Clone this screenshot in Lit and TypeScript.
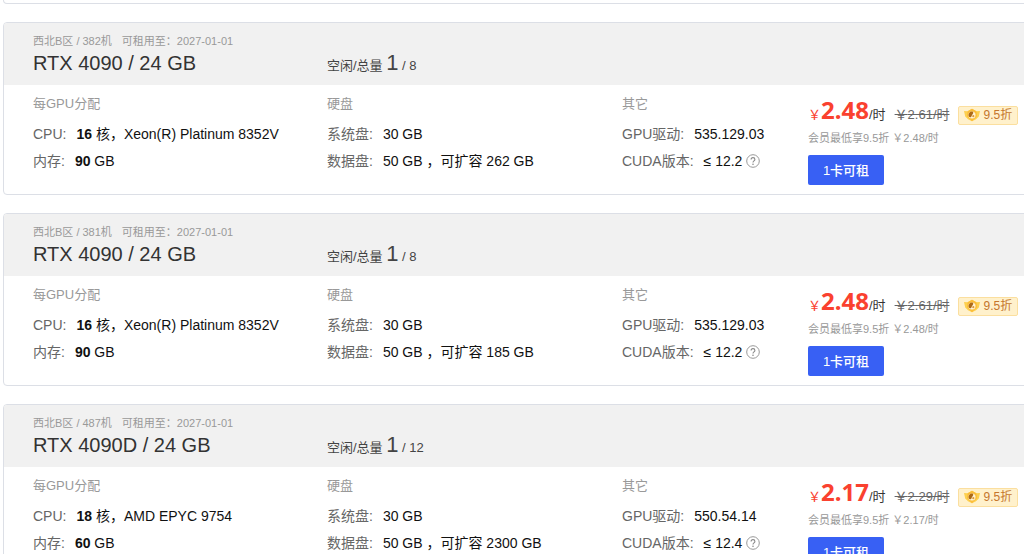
import { LitElement, html, css, svg } from "lit";
import { customElement, property } from "lit/decorators.js";

interface Machine {
  zone: string;
  until: string;
  gpu: string;
  free: number;
  total: number;
  cores: number;
  cpu: string;
  memory: number;
  expand: string;
  driver: string;
  cuda: string;
  price: string;
  original: string;
}

const machines: Machine[] = [
  { zone: "西北B区 / 382机", until: "2027-01-01", gpu: "RTX 4090 / 24 GB", free: 1, total: 8, cores: 16, cpu: "Xeon(R) Platinum 8352V", memory: 90, expand: "262 GB", driver: "535.129.03", cuda: "12.2", price: "2.48", original: "2.61" },
  { zone: "西北B区 / 381机", until: "2027-01-01", gpu: "RTX 4090 / 24 GB", free: 1, total: 8, cores: 16, cpu: "Xeon(R) Platinum 8352V", memory: 90, expand: "185 GB", driver: "535.129.03", cuda: "12.2", price: "2.48", original: "2.61" },
  { zone: "西北B区 / 487机", until: "2027-01-01", gpu: "RTX 4090D / 24 GB", free: 1, total: 12, cores: 18, cpu: "AMD EPYC 9754", memory: 60, expand: "2300 GB", driver: "550.54.14", cuda: "12.4", price: "2.17", original: "2.29" },
];

const helpIcon = svg`<svg class="help" viewBox="0 0 14 14" aria-hidden="true">
  <circle cx="7" cy="7" r="6.3" fill="none" stroke="#999" stroke-width="1"/>
  <path d="M5.1 5.6C5.1 4.4 5.900 3.600 7 3.600s1.900.8 1.900 1.800c0 1.400-1.900 1.500-1.900 3" fill="none" stroke="#888" stroke-width="1.1"/>
  <circle cx="7" cy="10.2" r=".8" fill="#888"/>
</svg>`;

const memberIcon = svg`<svg class="member" viewBox="0 0 16 14" aria-hidden="true">
  <path d="M0 3 3.600 3.200 8 .8l4.400 2.400L16 3l-1.200 5.600-2.800 2.600L8 13.200l-4-2L1.200 8.600Z" fill="#fdd04f"/>
  <path d="M8 .8l4.400 2.400.6 5-5 5-5-5 .6-5Z" fill="#fbbd3a"/>
  <circle cx="8" cy="7" r="3.500" fill="#fff3d6"/>
  <path d="M9.200 3.700A3.500 3.500 0 0 0 5.200 9.100C6.800 9.600 7.600 8.800 7.700 7.700 7.800 6.400 9.600 6 9.200 3.700Z" fill="#ad6a18"/>
  <circle cx="9.300" cy="8.200" r="1.100" fill="#d99a3c"/>
</svg>`;

@customElement("machine-card")
export class MachineCard extends LitElement {
  @property({ attribute: false }) machine!: Machine;

  static styles = css`
    :host {
      display: block;
      border: 1px solid #dcdfe6;
      border-radius: 4px;
      overflow: hidden;
      background: #fff;
    }
    .row {
      display: grid;
      grid-template-columns: minmax(260px, 294fr) minmax(230px, 295fr) minmax(160px, 186fr) minmax(216px, 219fr);
      padding-left: 29px;
    }
    .head {
      background: #f1f1f1;
      height: 62px;
      align-items: end;
    }
    .meta {
      display: flex;
      gap: 10px;
      font-size: 11px;
      line-height: 16px;
      color: #999;
    }
    .name {
      margin: 0;
      padding-bottom: 8px;
      font-size: 20px;
      font-weight: 400;
      line-height: 28px;
      color: #333;
    }
    .stock {
      padding-bottom: 5px;
      font-size: 13px;
      line-height: 28px;
      color: #444;
    }
    .free {
      font-size: 22px;
    }
    .total {
      font-size: 13px;
    }
    .body {
      height: 109px;
      font-size: 14px;
      line-height: 27px;
      color: #111;
    }
    .group {
      padding-top: 9px;
    }
    .group h3 {
      margin: 0 0 8px;
      font-size: 13px;
      font-weight: 400;
      line-height: 19px;
      color: #999;
    }
    .group dl,
    .group dd {
      margin: 0;
    }
    .item {
      display: flex;
      gap: 10px;
      white-space: nowrap;
    }
    .item dt {
      color: #666;
    }
    .help {
      width: 14px;
      height: 14px;
      vertical-align: -2px;
    }
    .buy {
      padding-top: 11px;
    }
    .price {
      display: flex;
      align-items: baseline;
      line-height: 28px;
      white-space: nowrap;
      color: #333;
      font-size: 13px;
    }
    .money {
      color: #fa412f;
    }
    .amount {
      font-family: "Noto Sans", "Noto Sans CJK SC", sans-serif;
      font-size: 24px;
      font-weight: 700;
    }
    .original {
      margin-left: 9px;
      color: #666;
    }
    .badge {
      box-sizing: border-box;
      height: 19px;
      margin-left: 8px;
      padding: 0 5px;
      border: 1px solid #fbdf9f;
      border-radius: 2px;
      background: #fff1cc;
      color: #c5762c;
      font-size: 12px;
      line-height: 17px;
    }
    .member {
      width: 16px;
      height: 14px;
      margin-right: 4px;
      vertical-align: -3px;
    }
    .note {
      margin: 0;
      font-size: 11px;
      line-height: 18px;
      color: #999;
    }
    .rent {
      display: block;
      width: 76px;
      height: 30px;
      margin-top: 8px;
      padding: 0 0 2px;
      border: 0;
      border-radius: 2px;
      background: #3860f4;
      color: #fff;
      font-family: inherit;
      font-size: 13px;
      font-weight: 500;
    }
  `;

  render() {
    const m = this.machine;
    return html`
      <div class="row head">
        <div>
          <div class="meta"><span>${m.zone}</span><span>可租用至：${m.until}</span></div>
          <h2 class="name">${m.gpu}</h2>
        </div>
        <div class="stock">空闲/总量 <span class="free">${m.free}</span> <span class="total">/ ${m.total}</span></div>
      </div>
      <div class="row body">
        <section class="group">
          <h3>每GPU分配</h3>
          <dl>
            <div class="item"><dt>CPU:</dt><dd><b>${m.cores}</b> 核，${m.cpu}</dd></div>
            <div class="item"><dt>内存:</dt><dd><b>${m.memory}</b> GB</dd></div>
          </dl>
        </section>
        <section class="group">
          <h3>硬盘</h3>
          <dl>
            <div class="item"><dt>系统盘:</dt><dd>30 GB</dd></div>
            <div class="item"><dt>数据盘:</dt><dd>50 GB ，可扩容 ${m.expand}</dd></div>
          </dl>
        </section>
        <section class="group">
          <h3>其它</h3>
          <dl>
            <div class="item"><dt>GPU驱动:</dt><dd>${m.driver}</dd></div>
            <div class="item"><dt>CUDA版本:</dt><dd>≤ ${m.cuda} ${helpIcon}</dd></div>
          </dl>
        </section>
        <div class="buy">
          <div class="price">
            <span class="money">￥<span class="amount">${m.price}</span></span><span>/时</span>
            <s class="original">￥${m.original}/时</s>
            <span class="badge">${memberIcon}9.5折</span>
          </div>
          <p class="note">会员最低享9.5折 ￥${m.price}/时</p>
          <button class="rent" type="button">1卡可租</button>
        </div>
      </div>
    `;
  }
}

@customElement("app-root")
export class AppRoot extends LitElement {
  static styles = css`
    :host {
      display: block;
      height: 100vh;
      overflow: hidden;
      background: #fff;
      font-family: "Liberation Sans", "Noto Sans CJK SC", sans-serif;
    }
    .list {
      display: flex;
      flex-direction: column;
      gap: 18px;
      margin: 0 -4px 0 3px;
    }
    .tail {
      height: 3px;
      border: 1px solid #dcdfe6;
      border-top: 0;
      border-radius: 0 0 4px 4px;
    }
  `;

  render() {
    return html`
      <main class="list">
        <div class="tail"></div>
        ${machines.map((m) => html`<machine-card .machine=${m}></machine-card>`)}
      </main>
    `;
  }
}
